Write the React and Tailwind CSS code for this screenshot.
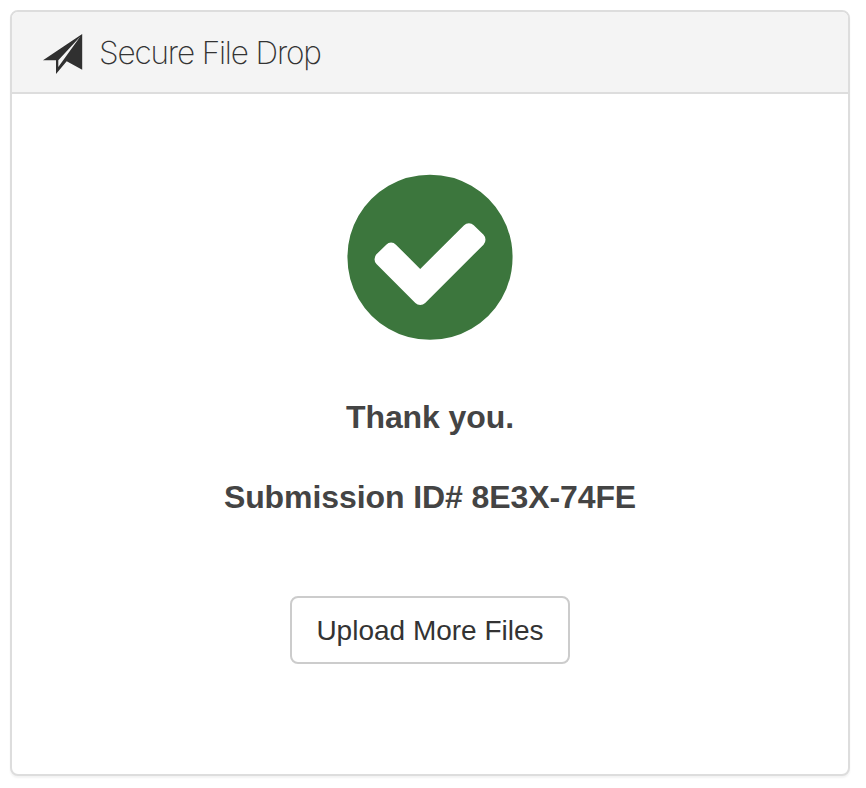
function PaperPlane() {
  return (
    <svg className="h-[42px] w-[42px] shrink-0 fill-[#303030]" viewBox="0 0 42 42">
      <path fillRule="evenodd" d="M40.200 1V36.800L24.700 28.200L14 41V27.300H1ZM38.300 3.500L16.300 27.300V34Z" />
    </svg>
  );
}

function CheckCircle() {
  return (
    <svg className="h-[166px] w-[166px] fill-[#3c763d]" viewBox="124 122 1544 1544">
      <path d="M1412 734q0-28-18-46l-91-90q-19-19-45-19t-45 19l-408 407-226-226q-19-19-45-19t-45 19l-91 90q-18 18-18 46 0 27 18 45l362 362q19 19 45 19 27 0 46-19l543-543q18-18 18-45zm252 162q0 209-103 385.500t-279.500 279.500-385.500 103-385.500-103-279.500-279.500-103-385.500 103-385.500 279.500-279.500 385.500-103 385.500 103 279.500 279.500 103 385.500z" />
    </svg>
  );
}

export default function App() {
  return (
    <div className="h-[788px] w-[866px] bg-white p-[10px] font-['Liberation_Sans',Arial,sans-serif]">
      <section className="flex h-[766px] w-[840px] flex-col overflow-hidden rounded-lg border-2 border-[#ddd] bg-white shadow-[0_2px_2px_rgba(0,0,0,0.05)]">
        <header className="flex h-[82px] shrink-0 items-center border-b-2 border-[#ddd] bg-[#f4f4f4] pt-1 pl-[30px]">
          <PaperPlane />
          <h1 className="mb-0.5 ml-[15px] whitespace-nowrap font-['Inter',sans-serif] text-[31.5px] leading-10 font-extralight tracking-[-1.15px] text-[#333]">Secure File Drop</h1>
        </header>
        <main className="flex flex-col items-center pt-[80px]">
          <CheckCircle />
          <h2 className="mt-[55px] text-[32px] leading-[44px] font-bold tracking-[-0.09px] text-[#444]">Thank you.</h2>
          <h2 className="mt-9 text-[32px] leading-[44px] font-bold tracking-[-0.09px] text-[#444]">Submission ID# 8E3X-74FE</h2>
          <button type="button" className="mt-[77px] h-[68px] w-[280px] rounded-lg border-2 border-[#ccc] bg-white pt-px text-[28px] leading-10 text-[#333]">Upload More Files</button>
        </main>
      </section>
    </div>
  );
}
